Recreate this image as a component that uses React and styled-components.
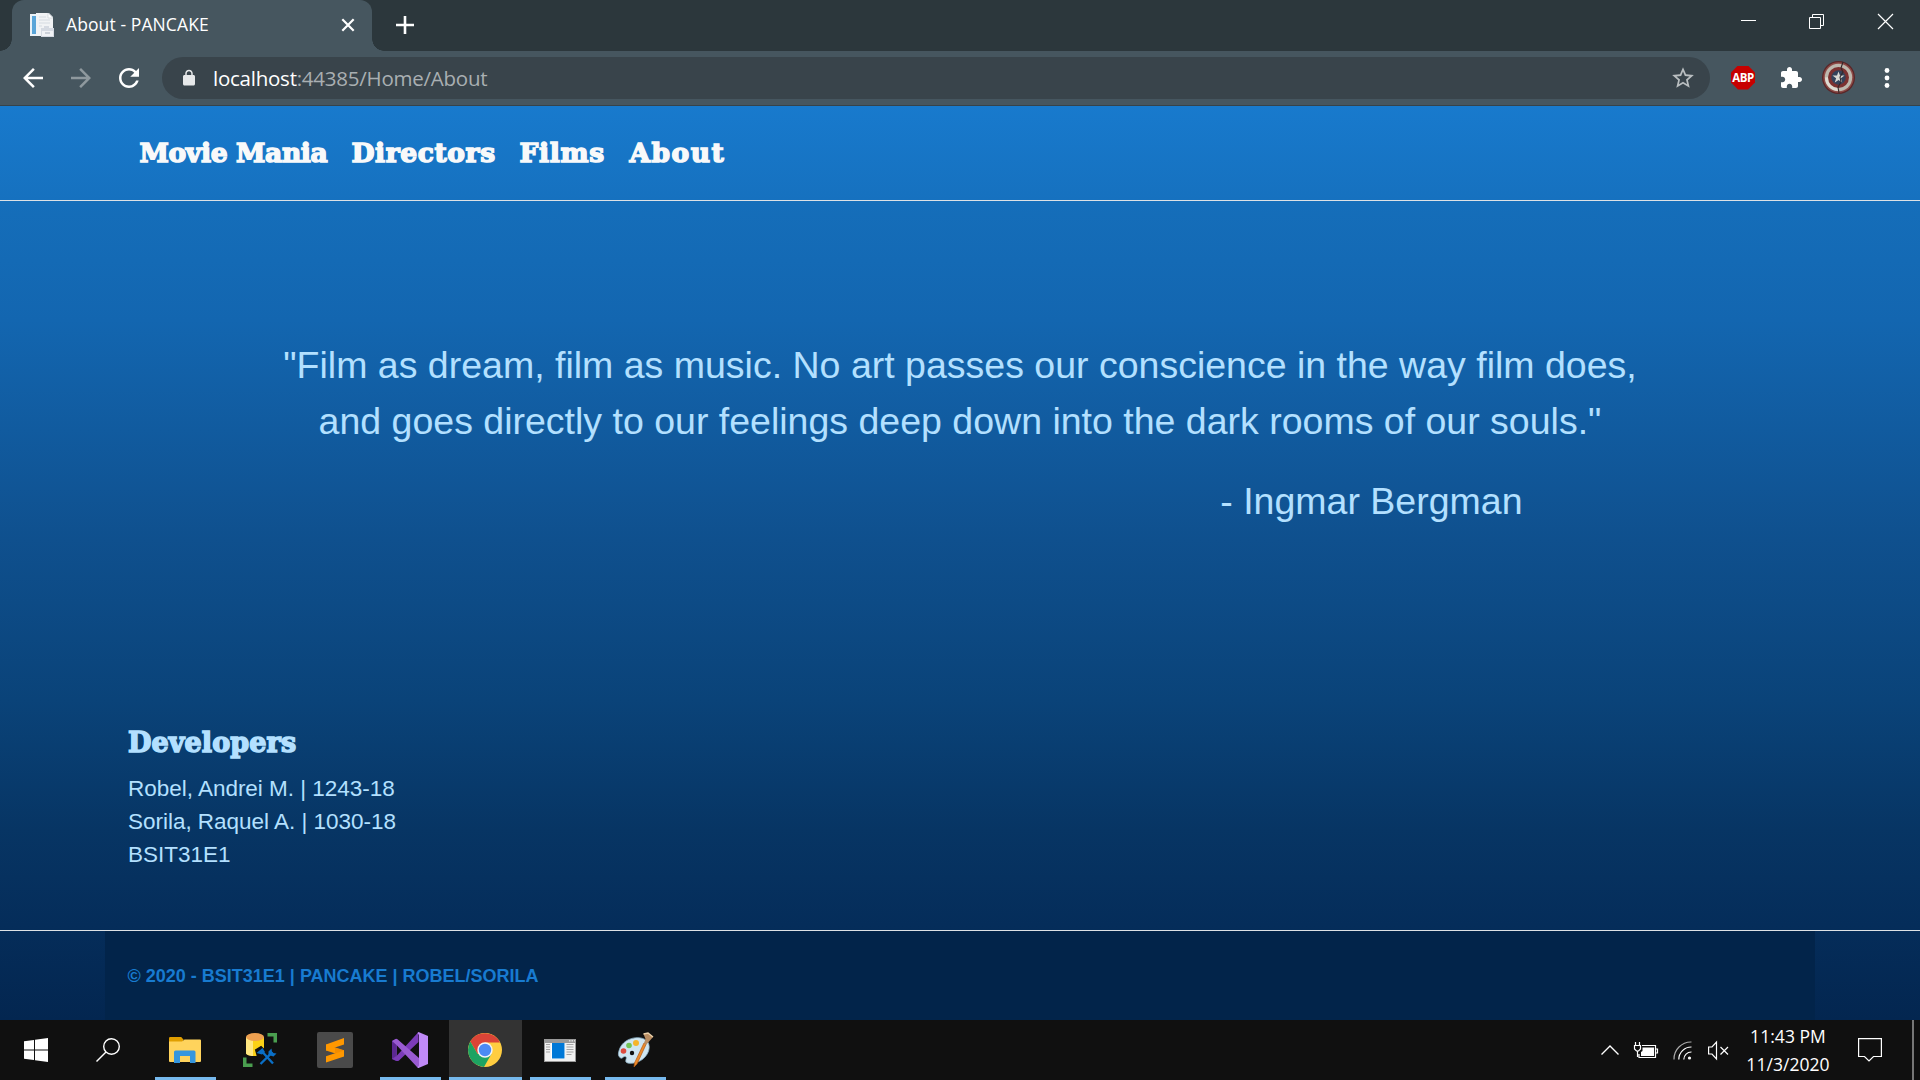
import React from "react";
import styled, { createGlobalStyle } from "styled-components";

const ui = `"Open Sans", "Noto Sans", sans-serif`;
const sans = `"Liberation Sans", Arial, sans-serif`;
const display = `"Cooper Black", "DejaVu Serif", serif`;

const GlobalStyle = createGlobalStyle`
  * { box-sizing: border-box; }
  html, body { margin: 0; padding: 0; background: #101010; }
  body { width: 1920px; height: 1080px; overflow: hidden; }
  svg { display: block; flex: none; overflow: visible; }
`;

const Screen = styled.div`
  display: flex;
  flex-direction: column;
  width: 1920px;
  height: 1080px;
  overflow: hidden;
`;

/* Browser chrome */
const TabStrip = styled.div`
  display: flex;
  height: 51px;
  background: #2c373c;
`;
const Flare = styled.span`
  align-self: flex-end;
  width: 12px;
  height: 12px;
  background: radial-gradient(circle at ${(p) => (p.$side === "left" ? "0 0" : "100% 0")}, transparent 11.5px, #46565f 12px);
`;
const Tab = styled.div`
  display: flex;
  align-items: center;
  width: 360px;
  padding: 0 12px 2px 18px;
  background: #46565f;
  border-radius: 12px 12px 0 0;
`;
const TabTitle = styled.span`
  flex: 1;
  margin: -1px 0 0 12px;
  color: #fff;
  font: 400 17.5px/24px ${ui};
  letter-spacing: ${(p) => p.$track}px;
  white-space: nowrap;
`;
const NewTab = styled.span`
  display: flex;
  align-items: center;
  padding: 0 0 2px 12px;
`;
const WindowButtons = styled.div`
  display: flex;
  margin-left: auto;
  height: 43px;
`;
const WindowButton = styled.span`
  display: flex;
  align-items: center;
  justify-content: center;
  width: ${(p) => p.$width}px;
`;
const Toolbar = styled.div`
  display: flex;
  align-items: center;
  height: 55px;
  padding: 0 21px 1px 18px;
  background: #46565f;
  border-bottom: 1px solid #36434a;
`;
const NavButtons = styled.div`
  display: flex;
  gap: 18px;
  width: 144px;
`;
const AddressBar = styled.div`
  display: flex;
  align-items: center;
  width: 1548px;
  height: 42px;
  padding: 0 14px 0 18px;
  border-radius: 21px;
  background: #39444b;
`;
const Url = styled.span`
  flex: 1;
  margin-left: 15px;
  color: #a9afb2;
  font: 400 20.5px/30px ${ui};
  letter-spacing: ${(p) => p.$track}px;
  b { color: #fff; font-weight: 400; }
`;
const Extensions = styled.div`
  display: flex;
  align-items: center;
  flex: 1;
  gap: 19.5px;
  padding-left: 21px;
`;
const ExtensionsMenu = styled.span`
  margin-left: 4px;
`;

/* Page */
const Page = styled.div`
  display: flex;
  flex-direction: column;
  height: 914px;
  background: linear-gradient(#187acd 0, #156eba 95px, #1366b0 214px, #0f508e 434px, #0a4379 594px, #073564 724px, #052d5a 819px, #032650 914px);
`;
const Header = styled.header`
  display: flex;
  height: 95px;
  padding: 27px 0 0 139.5px;
  gap: 24px;
  background: linear-gradient(#187acd, #1671bf);
  border-bottom: 1px solid #dee2e6;
`;
const displayText = `
  font-family: ${display};
  font-weight: 700;
  -webkit-text-stroke: 1.5px currentColor;
  white-space: nowrap;
`;
const NavLink = styled.a`
  ${displayText}
  width: ${(p) => p.$width}px;
  color: #f8f9fa;
  font-size: 26.5px;
  line-height: 40px;
  letter-spacing: ${(p) => p.$track}px;
`;
const Main = styled.main`
  display: flex;
  flex-direction: column;
  height: 729px;
  padding: 136px 128px 0;
  color: #b3e0ff;
  font-family: ${sans};
`;
const Quote = styled.blockquote`
  margin: 0;
  text-align: center;
  font-size: 37.5px;
  line-height: 56px;
  white-space: nowrap;
`;
const Author = styled.p`
  margin: 24px 269.5px 0 0;
  text-align: right;
  font-size: 37.5px;
  line-height: 56px;
`;
const Developers = styled.section`
  margin-top: 196px;
  font-size: 22.5px;
  line-height: 33px;
  letter-spacing: ${(p) => p.$track}px;
`;
const DevTitle = styled.h2`
  ${displayText}
  margin: 0 0 10.5px;
  font-size: 27px;
  line-height: 36px;
  letter-spacing: 0.1px;
`;
const Footer = styled.footer`
  display: flex;
  flex: 1;
  justify-content: center;
  border-top: 1px solid #dee2e6;
`;
const FooterInner = styled.div`
  display: flex;
  align-items: center;
  width: 1710px;
  padding: 2px 22.5px 0;
  background: #02244a;
  color: #187bd0;
  font: 700 18px/27px ${sans};
`;

/* Taskbar */
const Taskbar = styled.div`
  display: flex;
  height: 60px;
  background: #101010;
`;
const TaskButton = styled.span`
  display: flex;
  align-items: center;
  justify-content: center;
  width: 73px;
  margin-right: 2px;
  padding-right: 2px;
  background: ${(p) => (p.$active ? "#333" : "transparent")};
  background-image: ${(p) => (p.$open ? "linear-gradient(#76b9ed, #76b9ed)" : "none")};
  background-repeat: no-repeat;
  background-position: center bottom;
  background-size: ${(p) => (p.$active ? 73 : 61)}px 3px;
`;
const SystemButton = styled.span`
  display: flex;
  align-items: center;
  justify-content: center;
  width: 72px;
`;
const Tasks = styled.div`
  display: flex;
  margin-left: 5px;
`;
const Tray = styled.div`
  display: flex;
  align-items: center;
  margin-left: auto;
`;
const TrayIcon = styled.span`
  display: flex;
  justify-content: center;
  width: 36px;
`;
const Clock = styled.div`
  width: 108px;
  margin-left: -2px;
  color: #fff;
  text-align: center;
  font: 400 17.5px/28px ${ui};
  letter-spacing: ${(p) => p.$track}px;
`;
const Action = styled.span`
  margin: 0 30px 0 16px;
`;
const ShowDesktop = styled.span`
  align-self: stretch;
  width: 8px;
  border-left: 2px solid #777;
`;

const Material = ({ d, size = 30, fill = "#fff" }) => (
  <svg width={size} height={size} viewBox="0 0 24 24" fill={fill}><path d={d} /></svg>
);

const Favicon = () => (
  <svg width="24" height="24" viewBox="0 0 24 24">
    <path d="M0 1h7v22H0z" fill="#e9f1f7" />
    <path d="M2 3h4v18H2z" fill="#5aa5d8" />
    <path d="M6 0h13l4 4v19H6z" fill="#f1f3f5" />
    <path d="M18 0v5h5z" fill="#fff" stroke="#cbd2d9" strokeWidth=".7" />
    <path d="M9 4h7M9 7h11M9 10h11M9 13h3" stroke="#d5dbe1" />
    <path d="M11 15h3v-2h5v2h5v9H11z" fill="#d5dae2" />
    <path d="M12 18h11v5H12z" fill="#f0f2f5" />
    <path d="M15 19.5h5v1h-5z" fill="#a8b0bc" />
  </svg>
);
const AbpBadge = styled.span`
  display: flex;
  align-items: center;
  justify-content: center;
  width: 24px;
  height: 24px;
  background: #c70000;
  clip-path: polygon(29% 0, 71% 0, 100% 29%, 100% 71%, 71% 100%, 29% 100%, 0 71%, 0 29%);
  color: #fff;
  font: 700 11.5px/24px ${ui};
  letter-spacing: -0.5px;
`;
const Shield = () => (
  <svg width="33" height="33" viewBox="0 0 33 33">
    <circle cx="16.5" cy="16.5" r="16.5" fill="#5a2628" />
    <circle cx="16.5" cy="16.5" r="15.2" fill="#8d4a46" />
    <circle cx="16.5" cy="16.5" r="13.7" fill="#bdb8ae" />
    <path d="M3 16.5A13.5 13.5 0 0 0 16.5 30v-5A9 9 0 0 1 8 16z" fill="#dedbd2" />
    <circle cx="16.5" cy="16.5" r="10.500" fill="#7c3130" />
    <circle cx="16.5" cy="16.5" r="7.200" fill="#34425a" />
    <path d="M16.500 10.500l1.500 4 4.500.100-3.600 2.700 1.300 4.300-3.700-2.500-3.700 2.500 1.300-4.300-3.600-2.700 4.500-.100z" fill="#d9d9d4" />
    <path d="M21 1l-2 6 2 4-3 5 1 5-3 5 1 6" fill="none" stroke="#33282a" strokeWidth="1.1" />
  </svg>
);
const Folder = () => (
  <svg width="32" height="27" viewBox="0 0 32 27">
    <path d="M0 1.2Q0 0 1.2 0h11l2 2.2V6H0z" fill="#e09e00" />
    <path d="M0 4.5h13l2.5-2H31q1 0 1 1V24q0 1-1 1H1q-1 0-1-1z" fill="#ffd35c" />
    <path d="M5 26V15q0-1.5 1.5-1.5h18.500q1.500 0 1.500 1.500v11h-5.500v-7H11v7z" fill="#3696dd" />
  </svg>
);
const SqlTools = () => (
  <svg width="34" height="34" viewBox="0 0 34 34">
    <path d="M3 4v16c0 4 18 4 18 0V4z" fill="#fcd116" />
    <path d="M3 4v16c0 2 4 3 7 3V4z" fill="#ffe781" />
    <ellipse cx="12" cy="4" rx="9" ry="4" fill="#eda050" />
    <path d="M24.500 0H34v9.500h-3.500V3.500h-6zM0 24.500h3.500v6H9.500V34H0z" fill="#4a9e4f" />
    <path d="M13 17l5-3 3 3-2 3 10 10-2 2-10-10-2 2z" fill="#101010" stroke="#101010" strokeWidth="2" />
    <path d="M17.500 31l12-12M19.500 19l10.500 11.500" stroke="#0a6fc6" strokeWidth="2.400" />
    <path d="M13.500 20l6-5 2.500 4-3 2.500zM25.500 22v-3.500l3-3 .500 3.500 1 1 3.500.500-3 3z" fill="#0a6fc6" />
  </svg>
);
const Sublime = () => (
  <svg width="36" height="36" viewBox="0 0 36 36">
    <rect width="36" height="36" rx="2" fill="#4a4a4a" />
    <path d="M9 12.500L27 6v6.500l-18 6z" fill="#ff9800" />
    <path d="M9 12.500l18 5.800v6L9 18.500z" fill="#ff9800" />
    <path d="M9 24.200l18-6v6.200l-18 6z" fill="#ff9800" />
    <path d="M18 15.400l9 3-9 3z" fill="#e88200" opacity=".5" />
  </svg>
);
const VisualStudio = () => (
  <svg width="36" height="36" viewBox="0 0 36 36">
    <path d="M0 9l4.500-2v22L0 27z" fill="#52218a" />
    <path d="M0 27l4.500-3L26.500 0v10L7 28.500q-1 .800-2.500.500z" fill="#7b3bb8" />
    <path d="M0 9l3.500-2q1-.400 2 .300L27 26v10q-1 0-2-1L4.500 13 4.500 24 0 27z" fill="#9a5bd2" />
    <path d="M0 9l4.500 4v11L0 27z" fill="#5c2893" />
    <path d="M26.500 0L36 4v28l-9.500 4q-.500 0-1-.500l1.500-2V3l-1.500-2z" fill="#c08af7" />
  </svg>
);
const Chrome = () => (
  <svg width="34" height="34" viewBox="0 0 34 34">
    <circle cx="17" cy="17" r="17" fill="#ffcd40" />
    <path d="M2.300 8.500A17 17 0 0 1 32 9.500H17L9.600 21z" fill="#db4437" />
    <path d="M2.300 8.500A17 17 0 0 0 16 34l7.400-13H9.600z" fill="#1da362" />
    <circle cx="17" cy="17" r="7.700" fill="#f3f3f3" />
    <circle cx="17" cy="17" r="6.200" fill="#4a8af4" />
  </svg>
);
const AppWindow = () => (
  <svg width="32" height="23" viewBox="0 0 32 23">
    <path d="M0 0h32v23H0z" fill="#9a9a9a" />
    <path d="M1 4h30v18H1z" fill="#f1f1f1" />
    <path d="M25 1h1.500v1.500H25zM27.500 1H29v1.500h-1.500zM30 1h1v1.500h-1z" fill="#ddd" />
    <path d="M7 4h14v16H7z" fill="#fff" />
    <path d="M8 4h12.500v15.500H8z" fill="#0078d7" />
    <path d="M2 5.500h4M2 8h4M2 10.500h4M2 13h4M22.500 5.500h7M22.500 8h7M22.500 10.500h7M22.500 13h7M22.500 15.500h5" stroke="#a5a5a5" />
  </svg>
);
const Paint = () => (
  <svg width="36" height="36" viewBox="0 0 36 36">
    <path d="M3 16C8 5 24 3 30 9c6 7-1 20-13 22-4 .600-7 .300-8-1-1-2 2-5-1-5.500-2 0-3 3-5 1-3-2-1-7 0-9.500z" fill="#cfe5f1" stroke="#8fb4c9" strokeWidth=".8" />
    <circle cx="15" cy="21" r="2.200" fill="#111" />
    <circle cx="6.500" cy="19" r="2.800" fill="#dd4b3e" />
    <circle cx="12" cy="13.500" r="2.800" fill="#72c455" />
    <circle cx="19" cy="11" r="3" fill="#f6b42a" />
    <path d="M27 11l2 1.500L20 32l-3 3 .500-4z" fill="#ed8a2c" stroke="#b25c12" strokeWidth=".7" />
    <path d="M27 11l1.500-4L26.500 2 31 1l5 4-3.500 4-3.500 4z" fill="#b98d62" />
    <path d="M26.500 2L31 1l5 4" fill="none" stroke="#ead0aa" strokeWidth="1.500" />
  </svg>
);

const tasks = [
  { icon: <Folder />, open: true },
  { icon: <SqlTools /> },
  { icon: <Sublime /> },
  { icon: <VisualStudio />, open: true },
  { icon: <Chrome />, open: true, active: true },
  { icon: <AppWindow />, open: true },
  { icon: <Paint />, open: true },
];
const links = [
  { label: "Movie Mania", width: 188, track: -0.33 },
  { label: "Directors", width: 144, track: 0.6 },
  { label: "Films", width: 86, track: 0.7 },
  { label: "About", width: 95, track: 1.5 },
];

export default function App() {
  return (
    <Screen>
      <GlobalStyle />
      <TabStrip>
        <Flare $side="left" />
        <Tab>
          <Favicon />
          <TabTitle $track={0.1}>About - PANCAKE</TabTitle>
          <svg width="24" height="24" viewBox="0 0 24 24" stroke="#fff" strokeWidth="2.2"><path d="M6.300 6.300l11.400 11.400M17.700 6.300L6.300 17.700" /></svg>
        </Tab>
        <Flare $side="right" />
        <NewTab>
          <svg width="18" height="18" viewBox="0 0 18 18" stroke="#fff" strokeWidth="2.600"><path d="M9 0v18M0 9h18" /></svg>
        </NewTab>
        <WindowButtons>
          <WindowButton $width={67}><svg width="15" height="15" fill="#fff"><path d="M0 6h15v1H0z" /></svg></WindowButton>
          <WindowButton $width={69}><svg width="15" height="15" fill="none" stroke="#fff"><path d="M.500 3.500h11v11H.500zM3.500 3V.500h11v11H12" /></svg></WindowButton>
          <WindowButton $width={69}><svg width="15" height="15" stroke="#fff" strokeWidth="1.200"><path d="M0 0l15 15M15 0L0 15" /></svg></WindowButton>
        </WindowButtons>
      </TabStrip>
      <Toolbar>
        <NavButtons>
          <Material d="M20 11H7.830l5.590-5.590L12 4l-8 8 8 8 1.410-1.410L7.830 13H20v-2z" />
          <Material fill="#8f999e" d="M12 4l-1.410 1.410L16.170 11H4v2h12.170l-5.580 5.590L12 20l8-8z" />
          <Material d="M17.650 6.350C16.200 4.900 14.210 4 12 4c-4.420 0-7.990 3.580-7.990 8s3.570 8 7.990 8c3.730 0 6.840-2.550 7.730-6h-2.080c-.820 2.330-3.040 4-5.650 4-3.310 0-6-2.690-6-6s2.690-6 6-6c1.660 0 3.140.690 4.220 1.780L13 11h7V4l-2.350 2.350z" />
        </NavButtons>
        <AddressBar>
          <Material size={18} fill="#e6e8e9" d="M18 8h-1V6c0-2.760-2.240-5-5-5S7 3.240 7 6v2H6c-1.100 0-2 .900-2 2v10c0 1.100.900 2 2 2h12c1.100 0 2-.900 2-2V10c0-1.100-.900-2-2-2zM9 6c0-1.660 1.340-3 3-3s3 1.340 3 3v2H9V6z" />
          <Url $track={-0.24}><b>localhost</b>:44385/Home/About</Url>
          <Material size={26} fill="#b9bec0" d="M22 9.240l-7.190-.620L12 2 9.190 8.630 2 9.240l5.460 4.730L5.820 21 12 17.270 18.180 21l-1.630-7.030L22 9.240zM12 15.400l-3.760 2.270 1-4.280-3.320-2.880 4.380-.380L12 6.100l1.710 4.040 4.380.380-3.320 2.880 1 4.280L12 15.400z" />
        </AddressBar>
        <Extensions>
          <AbpBadge>ABP</AbpBadge>
          <ExtensionsMenu>
            <Material size={24} d="M20.500 11H19V7c0-1.100-.900-2-2-2h-4V3.500C13 2.120 11.880 1 10.500 1S8 2.120 8 3.500V5H4c-1.100 0-1.990.900-1.990 2v3.800H3.500c1.490 0 2.700 1.210 2.700 2.700s-1.210 2.700-2.700 2.700H2V20c0 1.100.900 2 2 2h3.800v-1.500c0-1.490 1.210-2.700 2.700-2.700 1.490 0 2.700 1.210 2.700 2.700V22H17c1.100 0 2-.900 2-2v-4h1.500c1.380 0 2.500-1.120 2.500-2.500S21.880 11 20.500 11z" />
          </ExtensionsMenu>
          <Shield />
          <svg width="24" height="24" fill="#fff"><circle cx="12" cy="4.500" r="2.400" /><circle cx="12" cy="12" r="2.400" /><circle cx="12" cy="19.500" r="2.400" /></svg>
        </Extensions>
      </Toolbar>

      <Page>
        <Header>
          {links.map((l) => (
            <NavLink key={l.label} $width={l.width} $track={l.track}>{l.label}</NavLink>
          ))}
        </Header>
        <Main>
          <Quote>
            "Film as dream, film as music. No art passes our conscience in the way film does,<br />
            and goes directly to our feelings deep down into the dark rooms of our souls."
          </Quote>
          <Author>- Ingmar Bergman</Author>
          <Developers $track={-0.02}>
            <DevTitle>Developers</DevTitle>
            <div>Robel, Andrei M. | 1243-18</div>
            <div>Sorila, Raquel A. | 1030-18</div>
            <div>BSIT31E1</div>
          </Developers>
        </Main>
        <Footer>
          <FooterInner>© 2020 - BSIT31E1 | PANCAKE | ROBEL/SORILA</FooterInner>
        </Footer>
      </Page>

      <Taskbar>
        <SystemButton>
          <svg width="24" height="24" viewBox="0 0 24 24" fill="#fff"><path d="M0 3.300L10 2v9.500H0zM11 1.800L24 0v11.500H11zM0 12.500h10V22L0 20.700zM11 12.500h13V24l-13-1.800z" /></svg>
        </SystemButton>
        <SystemButton>
          <svg width="24" height="24" fill="none" stroke="#fff" strokeWidth="1.400"><circle cx="15.500" cy="8.500" r="7.800" /><path d="M10 14L.500 23.500" /></svg>
        </SystemButton>
        <Tasks>
          {tasks.map((t, i) => (
            <TaskButton key={i} $open={t.open} $active={t.active}>{t.icon}</TaskButton>
          ))}
        </Tasks>
        <Tray>
          <TrayIcon><svg width="18" height="10" fill="none" stroke="#fff" strokeWidth="1.400"><path d="M.500 9.500L9 1l8.500 8.500" /></svg></TrayIcon>
          <TrayIcon>
            <svg width="24" height="17" fill="none" stroke="#fff">
              <path d="M8 3.500h13.500v12H5V12M22 7h1.500v4H22M1.500 0v3M5.500 0v3M.500 3.500h6v3.500l-2 2h-2l-2-2zM3.500 9v6" strokeWidth="1.200" />
              <path d="M8.500 5.500H20v8.500H7v-4l1.500-1z" fill="#fff" stroke="none" />
            </svg>
          </TrayIcon>
          <TrayIcon>
            <svg width="19" height="19" fill="none" stroke="#fff" strokeWidth="1.200">
              <path d="M1 18.500A17 17 0 0 1 18.500 1" opacity=".65" /><path d="M5.800 18.500A12.500 12.500 0 0 1 18.500 6" /><path d="M10.800 18.500a7.500 7.500 0 0 1 7.700-7.500" /><circle cx="16.500" cy="17" r="1.600" fill="#fff" stroke="none" />
            </svg>
          </TrayIcon>
          <TrayIcon>
            <svg width="21" height="19" fill="none" stroke="#fff" strokeWidth="1.200"><path d="M.600 6h3.400L8.500 1v17L4 13H.600zM12.500 6l7.500 7.500M20 6l-7.500 7.500" /></svg>
          </TrayIcon>
          <Clock $track={0.05}>11:43 PM<br />11/3/2020</Clock>
          <Action><svg width="24" height="24" fill="none" stroke="#fff" strokeWidth="1.200"><path d="M.600.600h22.800v17.900h-7.900L11 23l-4.500-4.500H.600z" /></svg></Action>
          <ShowDesktop />
        </Tray>
      </Taskbar>
    </Screen>
  );
}
